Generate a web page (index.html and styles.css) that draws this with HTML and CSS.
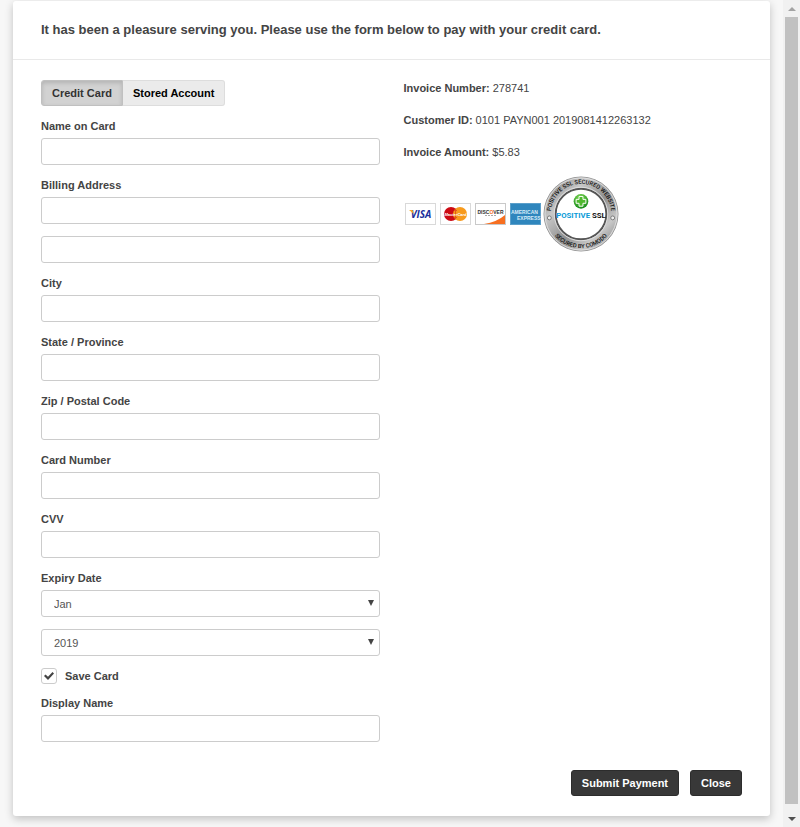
FILE: index.html
```html
<!DOCTYPE html>
<html lang="en">
<head>
    <meta charset="UTF-8">
    <meta name="viewport" content="width=device-width, initial-scale=1.0">
    <title>Credit Card Payment</title>
    <link rel="stylesheet" href="styles.css">
</head>
<body>

    <main class="page">
        <form class="card">
            <div class="card-header">
                <h1>It has been a pleasure serving you. Please use the form below to pay with your credit card.</h1>
            </div>

            <div class="card-body">
                <div class="columns">
                    <!-- Payment form -->
                    <div class="column">
                        <div class="tabs">
                            <button type="button" class="tab active">Credit Card</button>
                            <button type="button" class="tab">Stored Account</button>
                        </div>

                        <div class="field">
                            <label for="name">Name on Card</label>
                            <input type="text" id="name">
                        </div>
                        <div class="field">
                            <label for="address1">Billing Address</label>
                            <input type="text" id="address1">
                        </div>
                        <div class="field">
                            <input type="text" id="address2" aria-label="Billing Address Line 2">
                        </div>
                        <div class="field">
                            <label for="city">City</label>
                            <input type="text" id="city">
                        </div>
                        <div class="field">
                            <label for="state">State / Province</label>
                            <input type="text" id="state">
                        </div>
                        <div class="field">
                            <label for="zip">Zip / Postal Code</label>
                            <input type="text" id="zip">
                        </div>
                        <div class="field">
                            <label for="card-number">Card Number</label>
                            <input type="text" id="card-number">
                        </div>
                        <div class="field">
                            <label for="cvv">CVV</label>
                            <input type="text" id="cvv">
                        </div>
                        <div class="field">
                            <label for="month">Expiry Date</label>
                            <div class="select">
                                <select id="month">
                                    <option>Jan</option>
                                    <option>Feb</option>
                                    <option>Mar</option>
                                </select>
                            </div>
                        </div>
                        <div class="field">
                            <div class="select">
                                <select id="year" aria-label="Expiry Year">
                                    <option>2019</option>
                                    <option>2020</option>
                                    <option>2021</option>
                                </select>
                            </div>
                        </div>
                        <div class="check">
                            <input type="checkbox" id="save-card" checked>
                            <label for="save-card">Save Card</label>
                        </div>
                        <div class="field">
                            <label for="display-name">Display Name</label>
                            <input type="text" id="display-name">
                        </div>
                    </div>

                    <!-- Invoice details -->
                    <div class="column">
                        <p><strong>Invoice Number:</strong> 278741</p>
                        <p><strong>Customer ID:</strong> 0101 PAYN001 2019081412263132</p>
                        <p><strong>Invoice Amount:</strong> $5.83</p>

                        <div class="logos">
                            <div class="cards">
                                <svg class="logo" viewBox="0 0 31 22">
                                    <rect x="0.5" y="0.5" width="30" height="21" fill="#fff" stroke="#d9d9d9"/>
                                    <text x="16" y="15" class="visa">VISA</text>
                                    <path d="M4 7h3.500l1.500 4z" fill="#f7a823"/>
                                </svg>
                                <svg class="logo" viewBox="0 0 31 22">
                                    <rect x="0.5" y="0.5" width="30" height="21" fill="#fff" stroke="#d9d9d9"/>
                                    <circle cx="11" cy="11" r="7" fill="#cc0a14"/>
                                    <circle cx="20" cy="11" r="7" fill="#f79a1c"/>
                                    <path d="M15.500 5.600v10.800M14 7.500h3M14 14.500h3" stroke="#e25a18" fill="none"/>
                                    <text x="15.500" y="12.500" class="mastercard">MasterCard</text>
                                </svg>
                                <svg class="logo" viewBox="0 0 31 22">
                                    <rect x="0.5" y="0.5" width="30" height="21" fill="#fff" stroke="#c9c9c9"/>
                                    <path d="M9 21Q22 19 30 12v9z" fill="#f76f20"/>
                                    <text x="15.500" y="10.500" class="discover">DISC<tspan fill="#f76f20">O</tspan>VER</text>
                                    <path d="M10 12.500h11" stroke="#aaa" stroke-dasharray="2 1"/>
                                </svg>
                                <svg class="logo" viewBox="0 0 31 22">
                                    <rect x="0.5" y="0.5" width="30" height="21" fill="#2f86bd" stroke="#5b9fca"/>
                                    <text x="1" y="10.500" class="amex">AMERICAN</text>
                                    <text x="7" y="16.500" class="amex">EXPRESS</text>
                                </svg>
                            </div>
                            <svg class="seal" viewBox="0 0 78 78">
                                <defs>
                                    <linearGradient id="metal" x1="0" y1="0" x2="1" y2="1">
                                        <stop offset="0" stop-color="#777"/>
                                        <stop offset="0.3" stop-color="#c8c8c8"/>
                                        <stop offset="0.55" stop-color="#8f8f8f"/>
                                        <stop offset="0.75" stop-color="#c8c8c8"/>
                                        <stop offset="1" stop-color="#707070"/>
                                    </linearGradient>
                                    <radialGradient id="green" cx="0.45" cy="0.3" r="0.7">
                                        <stop offset="0" stop-color="#8be05a"/>
                                        <stop offset="1" stop-color="#128a17"/>
                                    </radialGradient>
                                    <path id="arc-top" d="M8 39a31 31 0 0 1 62 0"/>
                                    <path id="arc-bottom" d="M4 39a35 35 0 0 0 70 0"/>
                                </defs>
                                <circle cx="39" cy="39" r="38" fill="url(#metal)" stroke="#999"/>
                                <circle cx="39" cy="39" r="37" fill="none" stroke="#ddd"/>
                                <circle cx="39" cy="39" r="26" fill="#fff" stroke="#555" stroke-width="2"/>
                                <circle cx="39" cy="39" r="27.500" fill="none" stroke="#ddd"/>
                                <text class="seal-ring"><textPath href="#arc-top" startOffset="50%">POSITIVE SSL SECURED WEBSITE</textPath></text>
                                <text class="seal-ring"><textPath href="#arc-bottom" startOffset="50%">SECURED BY COMODO</textPath></text>
                                <circle cx="6.500" cy="43" r="2" fill="#eee" stroke="#777"/>
                                <circle cx="71.500" cy="43" r="2" fill="#eee" stroke="#777"/>
                                <circle cx="39" cy="26" r="7.500" fill="url(#green)"/>
                                <path d="M37 21h4v3h3v4h-3v3h-4v-3h-3v-4h3z" fill="#4fb82f" stroke="#fff"/>
                                <text x="39" y="43" class="seal-name"><tspan fill="#0a9bd8">POSITIVE</tspan> SSL</text>
                            </svg>
                        </div>
                    </div>
                </div>

                <div class="actions">
                    <button type="submit" class="btn">Submit Payment</button>
                    <button type="button" class="btn">Close</button>
                </div>
            </div>
        </form>
    </main>

    <!-- Scrollbar -->
    <div class="scrollbar">
        <span class="arrow up"></span>
        <span class="thumb"></span>
        <span class="arrow down"></span>
    </div>

</body>
</html>
```
FILE: styles.css
```css
* {
    box-sizing: border-box;
}
body {
    font-family: "Liberation Sans", Arial, sans-serif;
    font-size: 11px;
    line-height: 16px;
    color: #444;
    background-color: #f7f7f7;
    margin: 0;
    display: flex;
}
.page {
    flex: 1;
    padding: 1px 13px 10px;
}
.card {
    background-color: #fff;
    border-radius: 3px;
    box-shadow: 0 3px 8px rgba(0, 0, 0, 0.22);
}
.card-header {
    padding: 20px 28px;
    border-bottom: 1px solid #e9e9e9;
}
h1 {
    font-size: 13px;
    line-height: 18px;
    color: #444;
    margin: 0;
}
.card-body {
    padding: 20px 28px;
}
.columns {
    display: grid;
    grid-template-columns: 1fr 1fr;
    gap: 24px;
}
.column p {
    margin: 0 0 16px;
}

/* Tabs */
.tabs {
    display: flex;
    margin-bottom: 12px;
}
.tab {
    height: 26px;
    padding: 0 10px;
    font: inherit;
    font-weight: bold;
    color: #000;
    background-color: #ebebeb;
    border: 1px solid #ddd;
    border-left: 0;
    border-radius: 0 3px 3px 0;
}
.tab.active {
    color: #333;
    background-color: #d2d2d2;
    border: 1px solid #c0c0c0;
    border-radius: 3px 0 0 3px;
    box-shadow: inset 0 2px 4px rgba(0, 0, 0, 0.15);
}

/* Form fields */
.field {
    margin-bottom: 12px;
}
label {
    display: block;
    font-weight: bold;
}
.field label {
    margin-bottom: 4px;
}
.field input,
.field select {
    display: block;
    width: 100%;
    height: 27px;
    padding: 0 12px;
    font: inherit;
    color: #555;
    background-color: #fff;
    border: 1px solid #ccc;
    border-radius: 3px;
    appearance: none;
}
.select {
    position: relative;
}
.select::after {
    content: "";
    position: absolute;
    top: 10px;
    right: 6px;
    border: 3px solid transparent;
    border-top: 6px solid #444;
    border-bottom: 0;
    pointer-events: none;
}
.check {
    display: flex;
    gap: 8px;
    margin-bottom: 11px;
}
.check input {
    width: 16px;
    height: 16px;
    margin: 0;
    display: grid;
    place-items: center;
    border: 1px solid #ccc;
    border-radius: 3px;
    appearance: none;
}
.check input:checked::before {
    content: "";
    width: 10px;
    height: 8px;
    background-color: #444;
    clip-path: polygon(0 50%, 15% 30%, 40% 60%, 85% 0, 100% 20%, 40% 100%);
}

/* Card logos and seal */
.logos {
    display: flex;
    align-items: center;
    gap: 2px;
    padding-left: 1px;
}
.cards {
    display: flex;
    gap: 4px;
}
.logo {
    width: 31px;
    height: 22px;
}
.seal {
    width: 76px;
    height: 76px;
}
.logos text {
    font-weight: bold;
    text-anchor: middle;
}
.visa {
    font-family: "Open Sans", sans-serif;
    font-size: 10px;
    font-style: italic;
    fill: #1a2f9c;
}
.mastercard {
    font-size: 4px;
    font-style: italic;
    fill: #fff;
}
.discover {
    font-size: 5px;
    fill: #333;
}
.logos .amex {
    font-size: 5px;
    text-anchor: start;
    fill: #d8ecf8;
}
.logos .seal-ring {
    font-family: Roboto, sans-serif;
    font-size: 6px;
    font-weight: 500;
    fill: #111;
}
.seal-name {
    font-family: Roboto, sans-serif;
    font-size: 8px;
    fill: #111;
}

/* Buttons */
.actions {
    display: flex;
    justify-content: flex-end;
    gap: 11px;
    margin-top: 16px;
}
.btn {
    height: 26px;
    padding: 0 10px;
    font: inherit;
    font-weight: bold;
    color: #fff;
    background-color: #383838;
    border: 1px solid #2c2c2c;
    border-radius: 3px;
}

/* Scrollbar */
.scrollbar {
    position: sticky;
    top: 0;
    width: 17px;
    height: 100vh;
    padding: 0 2px;
    background-color: #f1f1f1;
    display: flex;
    flex-direction: column;
}
.thumb {
    flex: 1;
    margin-bottom: 6px;
    background-color: #c1c1c1;
}
.arrow {
    height: 17px;
    display: grid;
    place-items: center;
}
.arrow::before {
    content: "";
    border: 4px solid transparent;
}
.up::before {
    border-top: 0;
    border-bottom-color: #a3a3a3;
}
.down::before {
    border-bottom: 0;
    border-top-color: #505050;
}
```
